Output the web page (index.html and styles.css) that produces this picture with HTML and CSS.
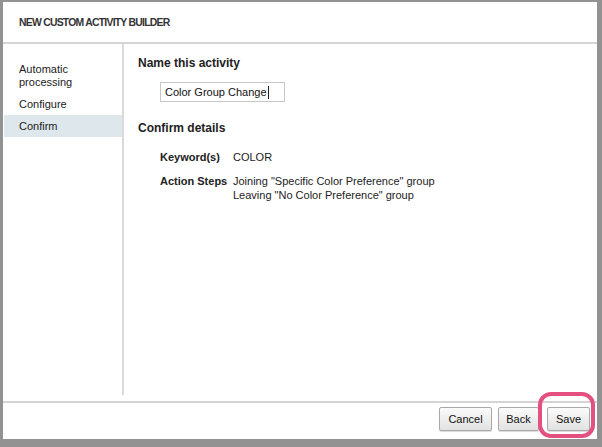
FILE: index.html
```html
<!DOCTYPE html>
<html>
<head>
<meta charset="utf-8">
<link rel="stylesheet" href="styles.css">
</head>
<body>
<div class="frame">
  <div class="dialog">
    <div class="header">NEW CUSTOM ACTIVITY BUILDER</div>
    <div class="body">
      <div class="sidebar">
        <div class="nav-item">Automatic<br>processing</div>
        <div class="nav-item">Configure</div>
        <div class="nav-item active">Confirm</div>
      </div>
      <div class="main">
        <div class="section-title">Name this activity</div>
        <div class="name-input"><span class="value">Color Group Change</span><span class="caret"></span></div>
        <div class="section-title confirm-title">Confirm details</div>
        <div class="details">
          <div class="label">Keyword(s)</div>
          <div class="val">COLOR</div>
          <div class="label steps">Action Steps</div>
          <div class="val steps">Joining "Specific Color Preference" group<br>Leaving "No Color Preference" group</div>
        </div>
      </div>
    </div>
    <div class="footer">
      <button class="btn cancel">Cancel</button>
      <button class="btn back">Back</button>
      <button class="btn save">Save</button>
      <div class="highlight"></div>
    </div>
  </div>
</div>
</body>
</html>
```

FILE: styles.css
```css
html, body {
  margin: 0;
  padding: 0;
}
body {
  width: 602px;
  height: 447px;
  overflow: hidden;
  font-family: "Liberation Sans", Arial, sans-serif;
  color: #222;
}
.frame {
  width: 602px;
  height: 447px;
  box-sizing: border-box;
  background: #929292;
  padding: 2px 5px 8px 3px;
}
.dialog {
  width: 594px;
  height: 437px;
  background: #fff;
  display: flex;
  flex-direction: column;
}
.header {
  height: 40px;
  border-bottom: 2px solid #d4d4d4;
  box-sizing: content-box;
  display: flex;
  align-items: center;
  padding-left: 16px;
  font-size: 10.4px;
  font-weight: bold;
  color: #333;
  letter-spacing: -0.75px;
}
.body {
  display: flex;
  height: 351px;
  padding-bottom: 6px;
  box-sizing: content-box;
}
.sidebar {
  width: 118px;
  margin-left: 1px;
  padding-top: 14px;
  border-right: 2px solid #dadada;
}
.nav-item {
  font-size: 11px;
  line-height: 13px;
  padding: 5px 0 4px 15px;
  color: #222;
}
.nav-item.active {
  background: #dde7ec;
}
.main {
  flex: 1;
  padding: 11px 0 0 14px;
}
.section-title {
  font-size: 12px;
  line-height: 16px;
  font-weight: bold;
  color: #222;
}
.name-input {
  margin: 11px 0 0 22px;
  width: 125px;
  height: 20px;
  box-sizing: border-box;
  border: 1px solid #c6c6c6;
  padding-left: 4px;
  display: flex;
  align-items: center;
  font-size: 11px;
  color: #111;
}
.caret {
  display: inline-block;
  width: 1px;
  height: 13px;
  background: #222;
  margin-left: 1px;
}
.confirm-title {
  margin-top: 18px;
}
.details {
  margin: 14px 0 0 22px;
  display: grid;
  grid-template-columns: 73px auto;
  font-size: 11px;
  line-height: 14px;
}
.details .label {
  font-weight: bold;
}
.details .steps {
  margin-top: 10px;
}
.footer {
  flex: 1;
  border-top: 2px solid #d4d4d4;
  display: flex;
  justify-content: flex-end;
  align-items: flex-start;
  padding: 4px 7px 0 0;
  gap: 6px;
  position: relative;
}
.btn {
  height: 24px;
  margin: 0;
  font-family: "Liberation Sans", Arial, sans-serif;
  font-size: 11px;
  color: #111;
  border: 1px solid #a9a9a9;
  border-radius: 2px;
  background: linear-gradient(#fbfbfb, #e2e2e2);
  box-shadow: 0 1px 1px rgba(0,0,0,0.15);
  padding: 0;
}
.btn.cancel { width: 53px; }
.btn.back { width: 41px; }
.btn.save { width: 43px; margin-left: 2px; }
.highlight {
  position: absolute;
  left: 535px;
  top: -11px;
  width: 57px;
  height: 46px;
  box-sizing: border-box;
  border: 4px solid #e4507f;
  border-radius: 13px;
}
```
